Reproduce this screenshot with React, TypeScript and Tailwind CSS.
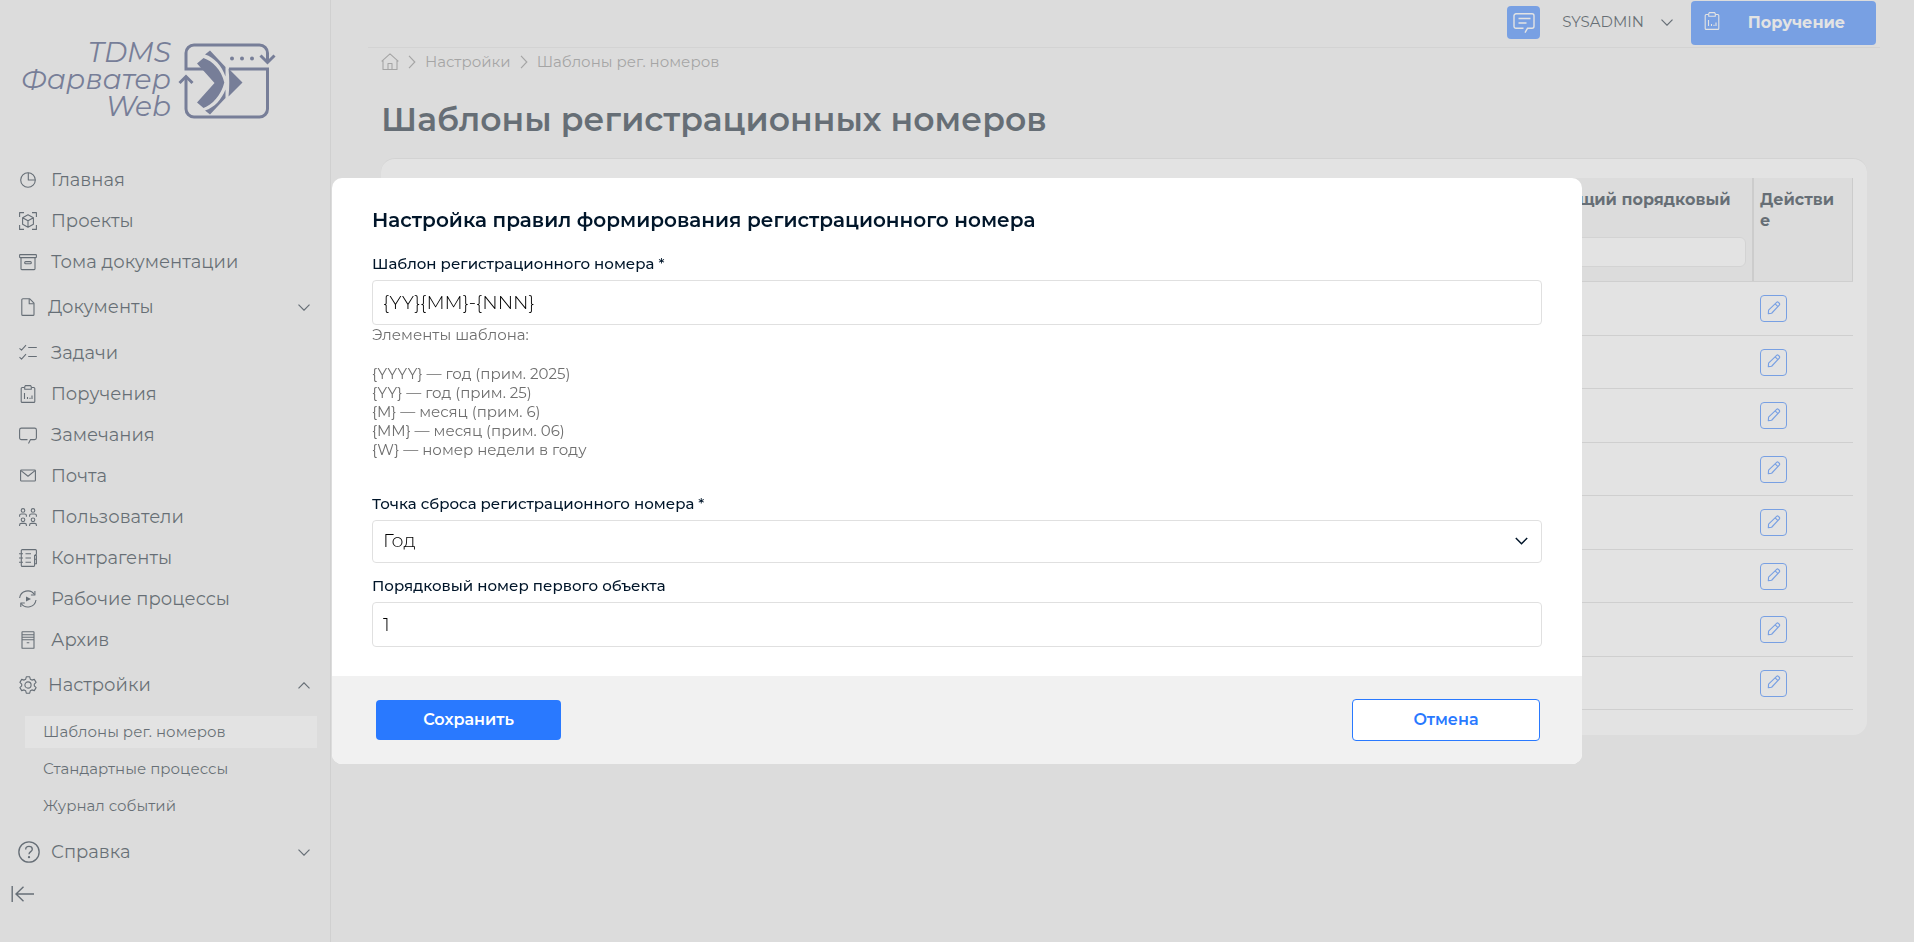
import { useState } from "react";
import type { ReactNode } from "react";

function Icon({ children, className = "size-[18px]" }: { children: ReactNode; className?: string }) {
  return (
    <svg
      viewBox="0 0 18 18"
      className={`shrink-0 ${className}`}
      fill="none"
      stroke="currentColor"
      strokeWidth="1.1"
      strokeLinejoin="round"
      aria-hidden="true"
    >
      {children}
    </svg>
  );
}

const clipboard = (
  <>
    <path d="M5.5 2.5H3.2a1 1 0 0 0-1 1v12.9a1 1 0 0 0 1 1h11.6a1 1 0 0 0 1-1V3.5a1 1 0 0 0-1-1h-2.3" />
    <path d="M6.4.6h5.2l.7 1.2v2.4H5.7V1.8z" />
    <path d="M5.5 8v6M8.5 12v2M11 12.8V14M13 10.5V14" />
  </>
);

const icons: Record<string, ReactNode> = {
  pie: (
    <>
      <circle cx="9" cy="9" r="7.3" />
      <path d="M9.3 1.7V9h7" />
    </>
  ),
  cube: (
    <>
      <path d="M.6 5V.6H5M13 .6h4.4V5M17.4 13v4.4H13M5 17.4H.6V13" />
      <path d="M9 2.8l5.4 3v6.4L9 15.2l-5.4-3V5.8zM3.6 5.8L9 8.8l5.4-3M9 8.8v6.4" />
    </>
  ),
  box: (
    <>
      <rect x=".6" y="1.6" width="16.8" height="3" rx=".6" />
      <path d="M2 4.6v11.2a.8.8 0 0 0 .8.8h12.4a.8.8 0 0 0 .8-.8V4.6" />
      <rect x="5.7" y="8.6" width="6.6" height="2.2" rx="1" />
    </>
  ),
  file: (
    <>
      <path d="M3.8.8h7l4.2 4.4v11.2a1 1 0 0 1-1 1H3.8a1 1 0 0 1-1-1V1.8a1 1 0 0 1 1-1z" />
      <path d="M10.2 1v4.7h4.7" />
    </>
  ),
  tasks: <path d="M.5 4.3l2 1.9L7 1.2M.5 13.2l2 1.9L7 10.1M9.2 3.5h8.6M9.2 12.5h8.6" />,
  clipboard,
  comment: <path d="M8.5 13.6H2.4A1.8 1.8 0 0 1 .6 11.8V3.9c0-1 .8-1.8 1.8-1.8h13.2c1 0 1.8.8 1.8 1.8v7.9c0 1-.8 1.8-1.8 1.8h-4.1L9.5 17.5" />,
  mail: (
    <>
      <rect x="1.6" y="3" width="14.8" height="11" rx=".8" />
      <path d="M2 3.6l7 5.6 7-5.6" />
    </>
  ),
  users: (
    <>
      <circle cx="4" cy="2.4" r="1.8" />
      <circle cx="14" cy="2.4" r="1.8" />
      <circle cx="4" cy="11.8" r="1.8" />
      <circle cx="14" cy="11.8" r="1.8" />
      <path d="M.6 8.8V7.6c0-1 .8-1.6 1.7-1.6h3.4c.9 0 1.7.6 1.7 1.6v1.2M10.6 8.8V7.6c0-1 .8-1.6 1.7-1.6h3.4c.9 0 1.7.6 1.7 1.6v1.2" />
      <path d="M.6 18V17c0-1 .8-1.6 1.7-1.6h3.4c.9 0 1.7.6 1.7 1.6v1M10.6 18V17c0-1 .8-1.6 1.7-1.6h3.4c.9 0 1.7.6 1.7 1.6v1" />
    </>
  ),
  notebook: (
    <>
      <path d="M14.8 17.4H3.3a1 1 0 0 1-1-1V1.6a1 1 0 0 1 1-1h13.1a1 1 0 0 1 1 1v3.6l-1.8 1.2v9.9c0 .6-.3 1.1-.8 1.1z" />
      <path d="M0 4.7h4M0 9h4M0 13.3h4M6.5 4.7H12M6.5 9H12M6.5 13.3H12M15.6 6.5h1.8v3.7h-1.8M15.6 10.2h1.8v4.6h-1.8" />
    </>
  ),
  cycle: (
    <>
      <path d="M.6 8A8.2 8.2 0 0 1 15.5 4.5M17 10A8.2 8.2 0 0 1 2.2 13.5" />
      <path d="M15.9 1v4h-4M1.8 17v-4h4" />
      <path d="M7 6.5v5l5-2.5z" fill="currentColor" stroke="none" />
    </>
  ),
  archive: (
    <>
      <rect x="3" y=".8" width="12" height="16.5" rx=".4" />
      <path d="M3 3.7h12M3 6.2h12M3 8.7h12M7.7 11.8h2.6" />
    </>
  ),
  gear: (
    <>
      <circle cx="9" cy="9" r="3.1" />
      <path d="M7.3.8h3.4l.6 2.4 1.6.9 2.4-.7 1.8 3-1.8 1.7v1.8l1.8 1.7-1.8 3-2.4-.7-1.6.9-.6 2.4H7.3l-.6-2.4-1.6-.9-2.4.7-1.8-3 1.8-1.7V8.1L.9 6.4l1.8-3 2.4.7 1.6-.9z" />
    </>
  ),
};

function Chevron({ up }: { up?: boolean }) {
  return (
    <svg viewBox="0 0 12 7" className="h-[7px] w-3 shrink-0" fill="none" stroke="currentColor" strokeWidth="1.2" aria-hidden="true">
      <path d={up ? "M.5 6.3L6 .8l5.5 5.5" : "M.5.7L6 6.2 11.5.7"} />
    </svg>
  );
}

function Logo() {
  return (
    <a href="#" className="flex h-[159px] items-center gap-[7px] pt-1 pl-[21px] text-[#273569]">
      <span className="w-[150px] pb-1 text-right text-[28px] leading-[27px] italic">
        TDMS
        <br />
        Фарватер
        <br />
        Web
      </span>
      <svg viewBox="178 43 98 77" className="h-[77px] w-[98px]" fill="none" stroke="currentColor" strokeWidth="3" aria-hidden="true">
        <path d="M204 69H186V53a8 8 0 0 1 8-8h65.5a8 8 0 0 1 8 8v9" />
        <path d="M260.5 55.5l7 7 7-7" />
        <path d="M229 69h38.5v40a8 8 0 0 1-8 8H194a8 8 0 0 1-8-8V78" />
        <path d="M179.5 83l6.5-6.5 6.5 6.5" />
        <g fill="currentColor" stroke="none">
          <circle cx="232" cy="58.5" r="2" />
          <circle cx="242" cy="58.5" r="2" />
          <circle cx="252" cy="58.5" r="2" />
          <path d="M197 63.5l6.5-5.5c9 3 18 12 20.8 24.5C221.5 95 212 105 203.5 108l-6.5-5.5L214.5 83z" />
          <path d="M205 54.5l5-4L225.500 67v9.500c-4-11-11-19-20.500-22z" />
          <path d="M205 110.500l5 4L225.500 98v-8.500c-4 10-11 18-20.500 21z" />
          <path d="M228.500 68.500l14 14-14 14c1-9 1-19 0-28z" />
        </g>
      </svg>
    </a>
  );
}

interface NavItem {
  icon: string;
  label: string;
  group?: boolean;
  open?: boolean;
}

const nav: NavItem[] = [
  { icon: "pie", label: "Главная" },
  { icon: "cube", label: "Проекты" },
  { icon: "box", label: "Тома документации" },
  { icon: "file", label: "Документы", group: true },
  { icon: "tasks", label: "Задачи" },
  { icon: "clipboard", label: "Поручения" },
  { icon: "comment", label: "Замечания" },
  { icon: "mail", label: "Почта" },
  { icon: "users", label: "Пользователи" },
  { icon: "notebook", label: "Контрагенты" },
  { icon: "cycle", label: "Рабочие процессы" },
  { icon: "archive", label: "Архив" },
  { icon: "gear", label: "Настройки", group: true, open: true },
];

const subNav = ["Шаблоны рег. номеров", "Стандартные процессы", "Журнал событий"];

function Sidebar() {
  return (
    <aside className="w-[331px] shrink-0 border-r border-[#d9d9d9]">
      <Logo />
      <nav className="text-lg">
        {nav.map(n =>
          n.group ? (
            <button key={n.label} type="button" className="flex h-[50px] w-full items-center gap-[11px] pr-5 pl-[19px] text-left">
              <Icon>{icons[n.icon]}</Icon>
              <span className="flex-1">{n.label}</span>
              <Chevron up={n.open} />
            </button>
          ) : (
            <a key={n.label} href="#" className="flex h-[41px] items-center gap-3.5 pl-[19px]">
              <Icon>{icons[n.icon]}</Icon>
              {n.label}
            </a>
          )
        )}
        <div className="flex flex-col gap-[5px] pt-1.5 pr-[13px] pb-[5px] pl-[25px] text-[15px]">
          {subNav.map((s, i) => (
            <a key={s} href="#" className={`flex h-8 items-center pl-[18px] ${i === 0 ? "bg-white" : ""}`}>
              {s}
            </a>
          ))}
        </div>
        <button type="button" className="flex h-[50px] w-full items-center gap-[11px] pr-5 pl-[18px] text-left">
          <Icon className="size-[22px]">
            <circle cx="9" cy="9" r="8.3" />
            <path d="M6.3 6.9C6.3 5.3 7.4 4.4 9 4.4s2.7 1 2.7 2.3c0 2-2.7 2-2.7 4.2" />
            <circle cx="9" cy="13.2" r=".4" fill="currentColor" />
          </Icon>
          <span className="flex-1">Справка</span>
          <Chevron />
        </button>
      </nav>
      <button type="button" aria-label="Свернуть меню" className="flex h-[34px] items-center pl-[11px]">
        <svg viewBox="0 0 24 16" className="h-4 w-6" fill="none" stroke="currentColor" strokeWidth="1.4" aria-hidden="true">
          <path d="M1.2 0v16M12.5.7L5 8l7.5 7.3M5 8h18" />
        </svg>
      </button>
    </aside>
  );
}

function TopBar() {
  return (
    <header className="mr-[34px] ml-[37px] flex h-12 items-start justify-end border-b border-[#dfdfdf] pr-1">
      <button type="button" aria-label="Сообщения" className="mt-1.5 flex size-[33px] items-center justify-center rounded bg-[#2979ff] text-white">
        <svg viewBox="0 0 22 20" className="h-5 w-[22px]" fill="none" stroke="currentColor" strokeWidth="1.4" aria-hidden="true">
          <path d="M10.5 15.3H3a2 2 0 0 1-2-2V2.8a2 2 0 0 1 2-2h16a2 2 0 0 1 2 2v10.5a2 2 0 0 1-2 2h-4.5L12 19.6" />
          <path d="M5.5 5.5h12M5.5 10h8" />
        </svg>
      </button>
      <button type="button" className="mt-1.5 ml-[22px] flex h-[33px] items-center gap-[17px] text-[15px]">
        SYSADMIN
        <Chevron />
      </button>
      <button type="button" className="mt-px ml-[18px] flex h-11 w-[185px] items-center rounded bg-[#2979ff] pr-1 pl-3 font-bold text-white">
        <Icon className="mb-1 size-[18px]">{clipboard}</Icon>
        <span className="flex-1">Поручение</span>
      </button>
    </header>
  );
}

function Crumb({ children }: { children: ReactNode }) {
  return (
    <>
      <svg viewBox="0 0 8 14" className="h-3.5 w-2" fill="none" stroke="currentColor" strokeWidth="1.2" aria-hidden="true">
        <path d="M1 .8L6.8 7 1 13.2" />
      </svg>
      <a href="#">{children}</a>
    </>
  );
}

function FilterHead({ label }: { label: string }) {
  return (
    <th className="border-r-2 border-[#d1d1d1] px-1.5 pt-[11px] pb-3.5 text-left align-top">
      <div className="h-[42px]">{label}</div>
      <input aria-label={label} className="mt-1.5 h-[30px] w-full rounded-md border border-[#dfdfdf] bg-white px-2" />
    </th>
  );
}

function TemplatesTable() {
  return (
    <div className="mt-[17px] rounded-[14px] border-t border-[#dfdfdf] bg-white px-3.5 pt-[19px] pb-[25px]">
      <table className="w-full table-fixed border-separate border-spacing-0 leading-[21px]">
        <colgroup>
          <col className="w-1/4" />
          <col />
          <col className="w-[249px]" />
          <col className="w-[99px]" />
        </colgroup>
        <thead className="bg-[#f1f1f1] font-semibold">
          <tr>
            <FilterHead label="Тип объекта" />
            <FilterHead label="Шаблон" />
            <FilterHead label="Следующий порядковый номер" />
            <th className="border-r border-[#d1d1d1] pt-[11px] pr-4 pl-1.5 text-left align-top break-words">Действие</th>
          </tr>
        </thead>
        <tbody>
          {Array.from({ length: 8 }, (_, i) => (
            <tr key={i} className="h-[53px] odd:h-[54px]">
              <td colSpan={3} className="border-t border-[#d7d7d7]" />
              <td className="border-t border-[#d7d7d7] pl-1.5">
                <button type="button" aria-label="Изменить" className="flex size-[27px] items-center justify-center rounded border border-[#2979ff] text-[#2979ff]">
                  <svg viewBox="0 0 16 16" className="mb-0.5 size-3.5" fill="none" stroke="currentColor" strokeWidth="1.3" strokeLinejoin="round" aria-hidden="true">
                    <path d="M1.5 14.5l.3-4L11 1.6c.6-.6 1.4-.6 2 0l1 1c.6.6.6 1.4 0 2L5.3 14z" />
                    <path d="M9.3 3.3l3.2 3.2" />
                  </svg>
                </button>
              </td>
            </tr>
          ))}
        </tbody>
        <tfoot>
          <tr>
            <td colSpan={4} className="border-t border-[#d7d7d7]" />
          </tr>
        </tfoot>
      </table>
    </div>
  );
}

const hints = [
  "{YYYY} — год (прим. 2025)",
  "{YY} — год (прим. 25)",
  "{M} — месяц (прим. 6)",
  "{MM} — месяц (прим. 06)",
  "{W} — номер недели в году",
];

function RuleDialog() {
  const [template, setTemplate] = useState("{YY}{MM}-{NNN}");
  const [reset, setReset] = useState("Год");
  const [first, setFirst] = useState("1");

  return (
    <form
      role="dialog"
      aria-labelledby="rule-title"
      className="w-[1250px] max-w-full overflow-hidden rounded-[10px] bg-white text-[15px] text-[#001529]"
    >
      <div className="px-10 pt-[30px] pb-[29px]">
        <h2 id="rule-title" className="text-xl leading-6 font-semibold">
          Настройка правил формирования регистрационного номера
        </h2>
        <label htmlFor="template" className="mt-5 block leading-6 font-medium">
          Шаблон регистрационного номера *
        </label>
        <input
          id="template"
          value={template}
          onChange={e => setTemplate(e.target.value)}
          className="mt-1 block h-[45px] w-full rounded border border-[#e0e0e0] px-2.5 text-[19px] font-light text-black"
        />
        <div className="leading-[19px] text-[#6f6f6f]">
          <p>Элементы шаблона:</p>
          <ul className="mt-5">
            {hints.map(h => (
              <li key={h}>{h}</li>
            ))}
          </ul>
        </div>
        <label htmlFor="reset" className="mt-[33px] block leading-6 font-medium">
          Точка сброса регистрационного номера *
        </label>
        <div className="relative mt-1">
          <select
            id="reset"
            value={reset}
            onChange={e => setReset(e.target.value)}
            className="block h-[43px] w-full appearance-none rounded border border-[#e0e0e0] bg-white px-2.5 text-[19px] font-light text-black"
          >
            <option>Год</option>
            <option>Месяц</option>
          </select>
          <svg viewBox="0 0 13 8" className="pointer-events-none absolute top-[17px] right-3.5 h-2 w-[13px]" fill="none" stroke="currentColor" strokeWidth="1.5" aria-hidden="true">
            <path d="M.8 1l5.7 5.7L12.2 1" />
          </svg>
        </div>
        <label htmlFor="first" className="mt-[11px] block leading-6 font-medium">
          Порядковый номер первого объекта
        </label>
        <input
          id="first"
          value={first}
          onChange={e => setFirst(e.target.value)}
          className="mt-1 block h-[45px] w-full rounded border border-[#e0e0e0] px-2.5 text-[19px] font-light text-black"
        />
      </div>
      <div className="flex h-[88px] items-center justify-between bg-[#f1f1f1] pr-[42px] pl-11 text-base font-semibold">
        <button type="submit" className="h-10 w-[185px] rounded bg-[#2979ff] text-white">
          Сохранить
        </button>
        <button type="button" className="h-[42px] w-[188px] rounded border border-[#2979ff] bg-white text-[#2979ff]">
          Отмена
        </button>
      </div>
    </form>
  );
}

export default function App() {
  return (
    <div className="min-h-screen bg-[#f1f1f1] font-['Montserrat','Inter',sans-serif] text-[#051525]">
      <div className="flex min-h-screen">
        <Sidebar />
        <div className="min-w-0 flex-1">
          <TopBar />
          <main className="pr-[47px] pl-[50px]">
            <div className="flex h-7 items-center gap-[9px] text-[15px] text-[#838383]">
              <a href="#" aria-label="Главная">
                <Icon>
                  <path d="M.6 8.3L9 .8l8.4 7.5M2 7.5v9h14v-9M7 16.5v-6h4v6" />
                </Icon>
              </a>
              <Crumb>Настройки</Crumb>
              <Crumb>Шаблоны рег. номеров</Crumb>
            </div>
            <h1 className="mt-[21px] text-[33px] leading-[44px] font-semibold">Шаблоны регистрационных номеров</h1>
            <TemplatesTable />
          </main>
        </div>
      </div>
      <div className="fixed inset-0 flex items-center justify-center bg-[#c7c7c7]/50">
        <RuleDialog />
      </div>
    </div>
  );
}
